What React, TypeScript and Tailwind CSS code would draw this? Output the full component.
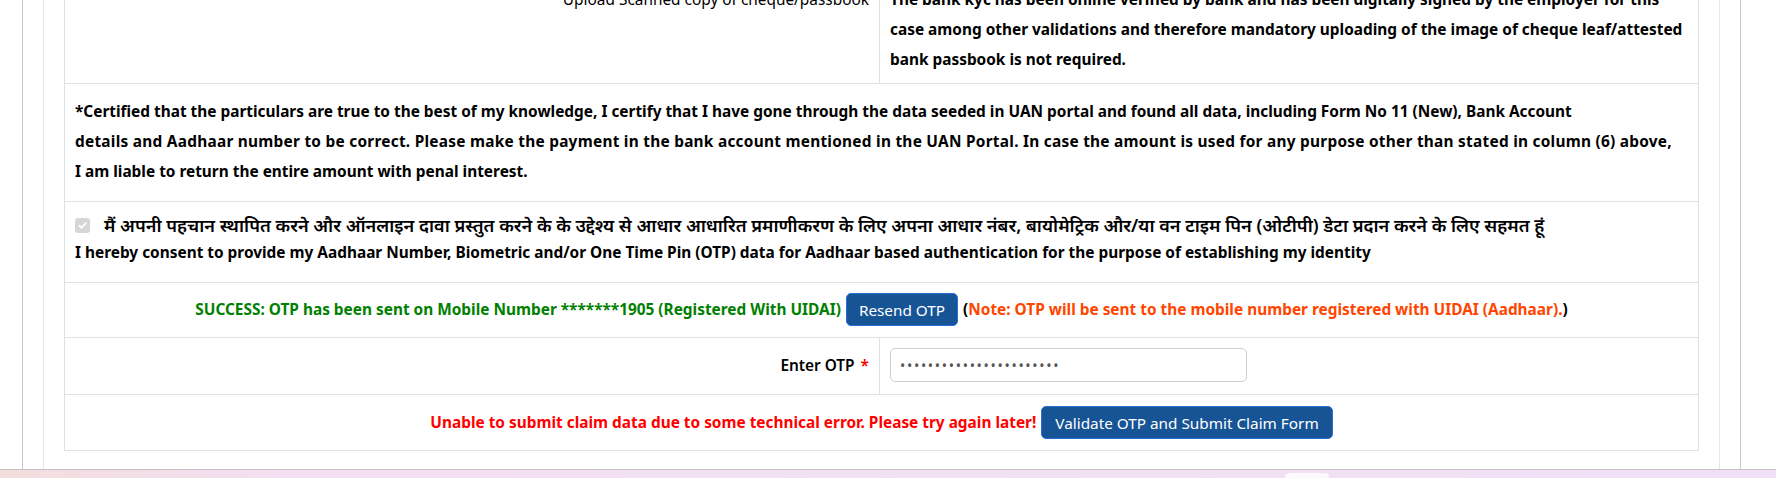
import React from "react";

const font = { fontFamily: '"Noto Sans", "Noto Sans Devanagari", "Lohit Devanagari", "Noto Sans CJK SC", sans-serif' };

export default function App() {
  return (
    <div className="relative flex h-[478px] w-[1776px] flex-col overflow-hidden bg-white text-black" style={font}>
      <div className="flex h-[469px] pl-[22px] pr-[35px]">
        <div className="flex flex-1 border-x border-[#c8c8c8] px-[20px]">
          <div className="flex-1 border-x border-[#e6e6e6] px-[20px]">
            <div className="-mt-[28px] border border-[#dee2e6] text-[15.4px] leading-[30px]">
              {/* Row 1 */}
              <div className="grid grid-cols-[815px_1fr] border-b border-[#dee2e6]">
                <div className="border-r border-[#dee2e6] px-[10px] pb-[8px] pt-[12px] text-right">Upload Scanned copy of cheque/passbook</div>
                <div className="whitespace-nowrap px-[10px] pb-[8px] pt-[12px] font-bold">
                  The bank kyc has been online verified by bank and has been digitally signed by the employer for this
                  <br />
                  case among other validations and therefore mandatory uploading of the image of cheque leaf/attested
                  <br />
                  bank passbook is not required.
                </div>
              </div>
              {/* Row 2 */}
              <div className="whitespace-nowrap border-b border-[#dee2e6] px-[10px] pb-[14px] pt-[13px] font-bold">
                *Certified that the particulars are true to the best of my knowledge, I certify that I have gone through the data seeded in UAN portal and found all data, including Form No 11 (New), Bank Account
                <br />
                <span className="tracking-[0.26px]">
                  details and Aadhaar number to be correct. Please make the payment in the bank account mentioned in the UAN Portal. In case the amount is used for any purpose other than stated in column (6) above,
                </span>
                <br />
                I am liable to return the entire amount with penal interest.
              </div>
              {/* Row 3 */}
              <div className="border-b border-[#dee2e6] px-[10px] pb-[15px] pt-[9px]">
                <div className="flex items-center leading-[28px]">
                  <span className="flex h-[15px] w-[15px] shrink-0 items-center justify-center rounded-[3px] bg-[#d6d6d6]">
                    <svg width="11" height="11" viewBox="0 0 12 12" fill="none">
                      <path d="M2.5 6.2 L5 8.6 L9.6 3.4" stroke="#ffffff" strokeWidth="1.8" strokeLinecap="round" strokeLinejoin="round" />
                    </svg>
                  </span>
                  <span className="ml-[14px] whitespace-nowrap text-[18.1px] font-semibold">
                    मैं अपनी पहचान स्थापित करने और ऑनलाइन दावा प्रस्तुत करने के के उद्देश्य से आधार आधारित प्रमाणीकरण के लिए अपना आधार नंबर, बायोमेट्रिक और/या वन टाइम पिन (ओटीपी) डेटा प्रदान करने के लिए सहमत हूं
                  </span>
                </div>
                <div className="whitespace-nowrap font-bold leading-[28px]">
                  I hereby consent to provide my Aadhaar Number, Biometric and/or One Time Pin (OTP) data for Aadhaar based authentication for the purpose of establishing my identity
                </div>
              </div>
              {/* Row 4 */}
              <div className="flex items-center justify-center whitespace-nowrap border-b border-[#dee2e6] pb-[11px] pt-[10px] font-bold">
                <span className="text-[#008000]">SUCCESS: OTP has been sent on Mobile Number *******1905 (Registered With UIDAI)</span>
                <button className="mx-[5px] h-[33px] rounded-[5px] border border-[#2a6fd6] bg-[#175496] px-[12px] text-[15.3px] font-normal leading-[20px] text-white">
                  Resend OTP
                </button>
                <span>
                  (<span className="text-[#ff4500]">Note: OTP will be sent to the mobile number registered with UIDAI (Aadhaar).</span>)
                </span>
              </div>
              {/* Row 5 */}
              <div className="grid grid-cols-[815px_1fr] border-b border-[#dee2e6]">
                <div className="flex items-center justify-end border-r border-[#dee2e6] px-[10px] font-semibold">
                  Enter OTP <span className="ml-[6px] text-[#ff0000]">*</span>
                </div>
                <div className="px-[10px] pb-[12px] pt-[10px]">
                  <input
                    type="password"
                    readOnly
                    defaultValue="12345678901234567890123"
                    className="block h-[34px] w-[357px] rounded-[5px] border border-[#cfcfcf] px-[9px] text-[14px] tracking-[1.7px] text-[#555] outline-none"
                  />
                </div>
              </div>
              {/* Row 6 */}
              <div className="flex items-center justify-center whitespace-nowrap py-[11px] font-bold">
                <span className="text-[#ff0000]">Unable to submit claim data due to some technical error. Please try again later!</span>
                <button className="ml-[5px] h-[33px] rounded-[5px] border border-[#2a6fd6] bg-[#175496] px-[13px] text-[15.3px] font-normal leading-[20px] text-white">
                  Validate OTP and Submit Claim Form
                </button>
              </div>
            </div>
          </div>
        </div>
      </div>
      <div className="relative h-[9px] border-t border-[#c9c0c6] bg-[linear-gradient(90deg,#f3dedd_0px,#f2dff4_320px,#f1e0f5_100%)]">
        <div className="absolute left-[1285px] top-[3px] h-[10px] w-[44px] rounded-[4px] bg-white/80"></div>
      </div>
    </div>
  );
}
